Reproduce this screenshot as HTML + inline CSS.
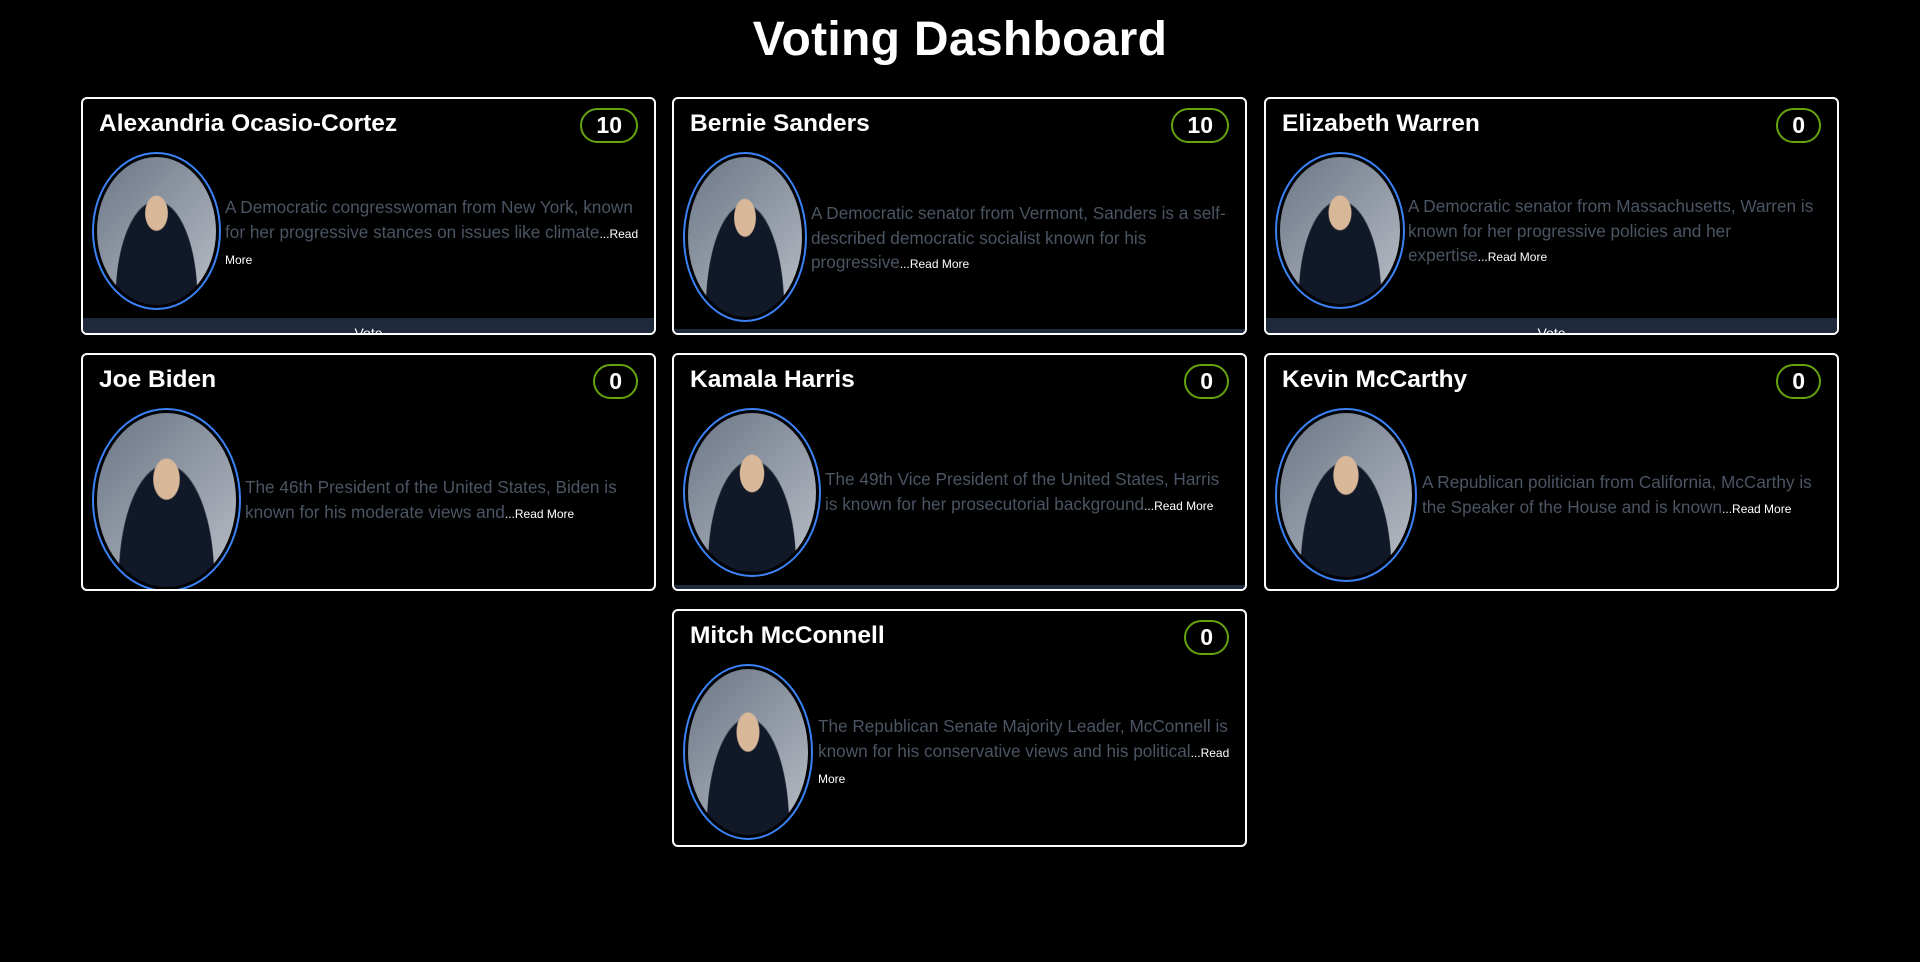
<!DOCTYPE html>
<html><head><meta charset="utf-8"><style>
*{box-sizing:border-box;margin:0;padding:0}
body{width:1920px;height:962px;background:#000;font-family:"Liberation Sans",sans-serif;color:#fff;position:relative;overflow:hidden}
h1{position:absolute;top:12px;left:0;width:1920px;text-align:center;font-size:48px;font-weight:bold;letter-spacing:0.3px}
.card{position:absolute;width:575px;height:238px;border:2px solid #fff;border-radius:6px;overflow:hidden;background:#000}
.name{position:absolute;left:16px;top:11px;font-size:24.5px;font-weight:bold}
.badge{position:absolute;right:16px;top:9px;height:35px;min-width:44px;padding:0 14px;border:2px solid #65a30d;border-radius:18px;font-size:23px;font-weight:bold;display:flex;align-items:center;justify-content:center}
.img{position:absolute;left:9px;top:53px;border:2px solid #3b82f6;border-radius:50%;overflow:hidden;padding:3px;background:#000}
.img div{width:100%;height:100%;border-radius:50%;background:radial-gradient(ellipse at 50% 38%,#d8b898 0 13%,transparent 14%),radial-gradient(ellipse at 50% 95%,#111827 0 48%,transparent 49%),linear-gradient(135deg,#6b7686,#b9bec6)}
.desc{position:absolute;right:14px;font-size:17.2px;line-height:24.5px;color:#4b5563}
.desc b{font-weight:normal;color:#fff;font-size:12px}
.vote{position:absolute;left:0;right:0;bottom:0;background:#1e293b;text-align:center;font-size:14px;color:#fff;overflow:hidden}
</style></head><body>
<h1>Voting Dashboard</h1>

<div class="card" style="left:81px;top:97px">
<div class="name">Alexandria Ocasio-Cortez</div><div class="badge">10</div>
<div class="img" style="width:129px;height:158px"><div></div></div>
<div class="desc" style="left:142px;top:96px">A Democratic congresswoman from New York, known for her progressive stances on issues like climate<b>...Read More</b></div>
<div class="vote" style="height:15px;line-height:30px">Vote</div>
</div>

<div class="card" style="left:672px;top:97px">
<div class="name">Bernie Sanders</div><div class="badge">10</div>
<div class="img" style="width:124px;height:170px"><div></div></div>
<div class="desc" style="left:137px;top:102px">A Democratic senator from Vermont, Sanders is a self-described democratic socialist known for his progressive<b>...Read More</b></div>
<div class="vote" style="height:4px"></div>
</div>

<div class="card" style="left:1264px;top:97px">
<div class="name">Elizabeth Warren</div><div class="badge">0</div>
<div class="img" style="width:130px;height:157px"><div></div></div>
<div class="desc" style="left:142px;top:95px">A Democratic senator from Massachusetts, Warren is known for her progressive policies and her expertise<b>...Read More</b></div>
<div class="vote" style="height:15px;line-height:30px">Vote</div>
</div>

<div class="card" style="left:81px;top:353px">
<div class="name">Joe Biden</div><div class="badge">0</div>
<div class="img" style="width:149px;height:184px"><div></div></div>
<div class="desc" style="left:162px;top:120px">The 46th President of the United States, Biden is known for his moderate views and<b>...Read More</b></div>
</div>

<div class="card" style="left:672px;top:353px">
<div class="name">Kamala Harris</div><div class="badge">0</div>
<div class="img" style="width:138px;height:169px"><div></div></div>
<div class="desc" style="left:151px;top:112px">The 49th Vice President of the United States, Harris is known for her prosecutorial background<b>...Read More</b></div>
<div class="vote" style="height:4px"></div>
</div>

<div class="card" style="left:1264px;top:353px">
<div class="name">Kevin McCarthy</div><div class="badge">0</div>
<div class="img" style="width:142px;height:174px"><div></div></div>
<div class="desc" style="left:156px;top:115px">A Republican politician from California, McCarthy is the Speaker of the House and is known<b>...Read More</b></div>
</div>

<div class="card" style="left:672px;top:609px">
<div class="name">Mitch McConnell</div><div class="badge">0</div>
<div class="img" style="width:130px;height:176px"><div></div></div>
<div class="desc" style="left:144px;top:103px">The Republican Senate Majority Leader, McConnell is known for his conservative views and his political<b>...Read More</b></div>
</div>
</body></html>
